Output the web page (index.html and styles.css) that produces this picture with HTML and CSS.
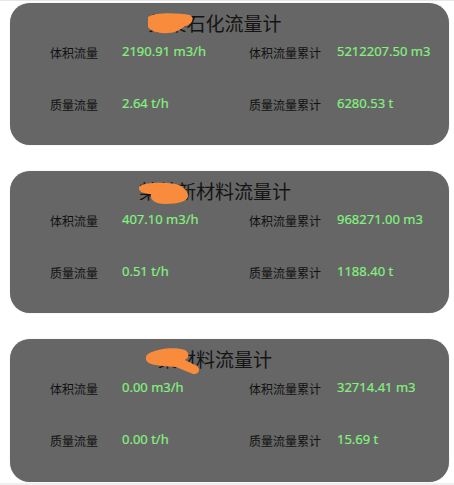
FILE: index.html
```html
<!DOCTYPE html>
<html lang="zh">
<head>
<meta charset="utf-8">
<link rel="stylesheet" href="styles.css">
</head>
<body>
<div class="page">
  <section class="card">
    <h2 class="title"><span class="title-text">某某石化流量计<svg class="blot blot-1" width="80" height="40" viewBox="0 0 80 40"><path d="M10 14 C18 9, 40 10, 52 12 C56 14, 55 20, 50 22 C44 24, 40 30, 30 30 C22 31, 12 28, 10 24 Z" /></svg></span></h2>
    <div class="grid">
      <span class="label">体积流量</span><span class="value">2190.91 m3/h</span>
      <span class="label">体积流量累计</span><span class="value">5212207.50 m3</span>
      <span class="label">质量流量</span><span class="value">2.64 t/h</span>
      <span class="label">质量流量累计</span><span class="value">6280.53 t</span>
    </div>
  </section>
  <section class="card">
    <h2 class="title"><span class="title-text">某某新材料流量计<svg class="blot blot-2" width="80" height="40" viewBox="0 0 80 40"><path d="M10 16 C14 11, 36 11, 46 13 C52 14, 58 18, 59 24 C60 30, 50 33, 36 33 C26 33, 20 28, 22 23 C16 23, 9 21, 10 16 Z" /></svg></span></h2>
    <div class="grid">
      <span class="label">体积流量</span><span class="value">407.10 m3/h</span>
      <span class="label">体积流量累计</span><span class="value">968271.00 m3</span>
      <span class="label">质量流量</span><span class="value">0.51 t/h</span>
      <span class="label">质量流量累计</span><span class="value">1188.40 t</span>
    </div>
  </section>
  <section class="card card-last">
    <h2 class="title"><span class="title-text">某材料流量计<svg class="blot blot-3" width="80" height="40" viewBox="0 0 80 40"><path d="M10 15 C20 9, 38 8, 47 11 C52 14, 51 19, 47 21 L59 27 C63 30, 61 36, 55 35 L38 28 C28 27, 16 27, 11 24 C7 22, 7 17, 10 15 Z" /></svg></span></h2>
    <div class="grid">
      <span class="label">体积流量</span><span class="value">0.00 m3/h</span>
      <span class="label">体积流量累计</span><span class="value">32714.41 m3</span>
      <span class="label">质量流量</span><span class="value">0.00 t/h</span>
      <span class="label">质量流量累计</span><span class="value">15.69 t</span>
    </div>
  </section>
</div>
</body>
</html>
```
FILE: styles.css
```css
html, body {
  margin: 0;
  padding: 0;
  background: #ffffff;
}

.page {
  box-sizing: border-box;
  height: 485px;
  border-top: 1px solid #e6e6e6;
  border-bottom: 2px solid #efefef;
  padding: 2px 5px 0 10px;
  display: flex;
  flex-direction: column;
  gap: 26px;
}

.card {
  height: 142px;
  background: #666666;
  border-radius: 20px;
  box-shadow: 0 0 1px rgba(0, 0, 0, 0.3);
  display: flex;
  flex-direction: column;
}

.card-last {
  height: 143px;
}

.title {
  margin: 0;
  height: 40px;
  line-height: 40px;
  padding-right: 29px;
  text-align: center;
  font-family: "Noto Sans CJK SC", "Noto Sans", sans-serif;
  font-weight: normal;
  font-size: 19px;
  color: #141414;
}

.title-text {
  position: relative;
  display: inline-block;
}

.blot {
  position: absolute;
  top: 0;
  left: -10px;
}

.blot path {
  fill: #f88b3c;
}

.blot-3 {
  left: -20px;
}

.grid {
  display: grid;
  grid-template-columns: 72px 127px 88px 1fr;
  grid-auto-rows: 20px;
  row-gap: 32px;
  padding-left: 40px;
  align-items: baseline;
}

.label {
  font-family: "Noto Sans CJK SC", sans-serif;
  font-size: 12px;
  line-height: 20px;
  color: #111111;
}

.value {
  font-family: "Noto Sans", "Noto Sans CJK SC", sans-serif;
  font-size: 13px;
  line-height: 20px;
  color: #84f07e;
  -webkit-text-stroke: 0.2px #84f07e;
  position: relative;
  top: -2px;
}
```
